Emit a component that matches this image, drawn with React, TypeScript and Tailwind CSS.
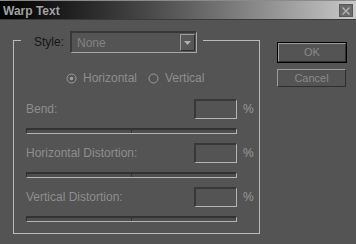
import React from "react"

const font = { fontFamily: '"Liberation Sans", Arial, sans-serif' }

function Radio({ checked, label }: { checked?: boolean; label: string }) {
  return (
    <div className="flex items-center gap-[6px]">
      <svg width="11" height="11" viewBox="0 0 11 11">
        <circle cx="5.5" cy="5.5" r="4.5" fill="none" stroke="#9c9c9c" strokeWidth="1" />
        {checked && <circle cx="5.5" cy="5.5" r="1.8" fill="#9c9c9c" />}
      </svg>
      <span className="text-[12px] leading-[14px] text-[#8e8e8e]">{label}</span>
    </div>
  )
}

function Slider() {
  return (
    <div className="flex w-[211px] h-[6px] border-t-2 border-l border-[#323232] border-b border-r border-b-[#b4b4b4] border-r-[#b4b4b4] bg-[#4e4e4e]">
      <div className="flex-1 border-r border-[#323232]" />
      <div className="flex-1" />
    </div>
  )
}

function ValueRow({ label }: { label: string }) {
  return (
    <div>
      <div className="flex items-center h-[20px]">
        <span className="w-[168px] text-[12px] leading-[14px] text-[#8e8e8e]">{label}</span>
        <div className="w-[43px] h-[20px] border-t-2 border-l-2 border-[#383838] border-b border-r border-b-[#b4b4b4] border-r-[#b4b4b4]" />
        <span className="ml-[6px] text-[12px] leading-[14px] text-[#9a9a9a]">%</span>
      </div>
      <div className="mt-[9px] mb-[9px]">
        <Slider />
      </div>
    </div>
  )
}

export default function App() {
  return (
    <div className="w-[356px] h-[244px] bg-[#545454] overflow-hidden" style={font}>
      {/* Title bar */}
      <div className="h-[20px] border-t border-[#8a8a8a] border-b border-b-[#3a3a3a] bg-gradient-to-r from-[#030303] to-[#cacaca] flex items-start justify-between pl-[3px] pr-[3px]">
        <span className="mt-[3px] text-[12px] leading-[14px] font-bold text-[#a2a2a2]">Warp Text</span>
        <div className="mt-[3px] w-[14px] h-[13px] bg-[#6a6a6a] border border-[#585858] flex items-center justify-center">
          <svg width="8" height="8" viewBox="0 0 8 8">
            <path d="M0.5 0.5 L7.5 7.5 M7.5 0.5 L0.5 7.5" stroke="#b4b4b4" strokeWidth="1.4" />
          </svg>
        </div>
      </div>

      {/* Body */}
      <div className="flex items-start">
        <fieldset className="ml-[13px] mt-[7px] w-[247px] border border-[#bababa] p-0 m-0">
          <legend className="ml-[7px] pt-[4px] pl-[13px] pr-[6px] flex items-center">
            <span className="text-[12px] leading-[14px] text-[#141414]">Style:</span>
            <div className="ml-[6px] w-[127px] h-[22px] flex items-center border-t-2 border-l-2 border-[#383838] border-b border-r border-b-[#a8a8a8] border-r-[#a8a8a8] pl-[5px] pr-[1px]">
              <span className="flex-1 text-[12px] leading-[14px] text-[#838383]">None</span>
              <div className="w-[15px] h-[17px] bg-[#585858] border-t border-l border-[#9c9c9c] border-b border-r border-b-[#2e2e2e] border-r-[#2e2e2e] flex items-center justify-center">
                <svg width="7" height="4" viewBox="0 0 7 4">
                  <path d="M0 0 L7 0 L3.5 4 Z" fill="#b0b0b0" />
                </svg>
              </div>
            </div>
          </legend>

          <div className="pl-[12px] pt-[18px] pb-[2px]">
            <div className="flex items-center gap-[11px] ml-[40px] h-[14px]">
              <Radio checked label="Horizontal" />
              <Radio label="Vertical" />
            </div>
            <div className="mt-[14px]">
              <ValueRow label="Bend:" />
              <ValueRow label="Horizontal Distortion:" />
              <ValueRow label="Vertical Distortion:" />
            </div>
          </div>
        </fieldset>

        <div className="ml-[17px] mt-[22px] flex flex-col">
          <div className="w-[70px] h-[21px] border border-black">
            <div className="h-full border-t border-l border-[#9c9c9c] border-b border-r border-b-[#2e2e2e] border-r-[#2e2e2e] flex items-center justify-center text-[11px] leading-[13px] text-[#8a8a8a]">
              OK
            </div>
          </div>
          <div className="mt-[6px] w-[69px] h-[18px] border-t border-l border-[#9c9c9c] border-b border-r border-b-[#2e2e2e] border-r-[#2e2e2e] flex items-center justify-center text-[11px] leading-[13px] text-[#8a8a8a]">
            Cancel
          </div>
        </div>
      </div>
    </div>
  )
}
